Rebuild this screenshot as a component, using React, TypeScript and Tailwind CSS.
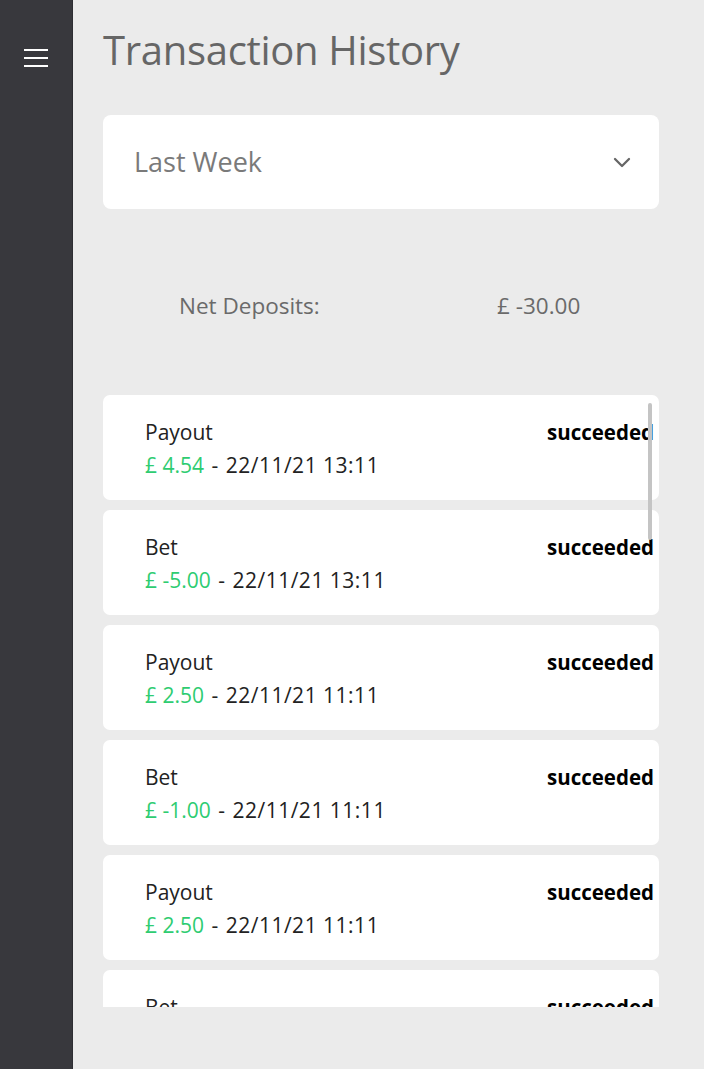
import React from "react";

const items = [
  { type: "Payout", amount: "£ 4.54", date: "22/11/21 13:11" },
  { type: "Bet", amount: "£ -5.00", date: "22/11/21 13:11" },
  { type: "Payout", amount: "£ 2.50", date: "22/11/21 11:11" },
  { type: "Bet", amount: "£ -1.00", date: "22/11/21 11:11" },
  { type: "Payout", amount: "£ 2.50", date: "22/11/21 11:11" },
  { type: "Bet", amount: "£ -1.00", date: "22/11/21 11:11" },
];

export default function App() {
  return (
    <div
      className="flex h-[1069px] w-[704px] overflow-hidden bg-[#ebebeb]"
      style={{ fontFamily: '"Open Sans", "Noto Sans", sans-serif' }}
    >
      <aside className="w-[73px] shrink-0 bg-[#38383d] border-r border-[#2e2e33] flex justify-center pt-[49px]">
        <div className="flex flex-col gap-[6px] w-[24px]">
          <div className="h-[2px] bg-white" />
          <div className="h-[2px] bg-white" />
          <div className="h-[2px] bg-white" />
        </div>
      </aside>
      <main className="flex-1 pl-[30px] pr-[45px]">
        <h1 className="mt-[24px] text-[40px] leading-[52px] text-[#666666] tracking-[-0.3px]">
          Transaction History
        </h1>
        <div className="mt-[39px] h-[94px] rounded-[8px] bg-white flex items-center justify-between pl-[31px] pr-[28px]">
          <span className="text-[27px] text-[#7a7a7a]">Last Week</span>
          <svg width="18" height="11" viewBox="0 0 18 11" fill="none">
            <path d="M2 2l7 7 7-7" stroke="#666" strokeWidth="2.3" strokeLinecap="round" strokeLinejoin="round" />
          </svg>
        </div>
        <div className="mt-[80px] flex text-[22.5px] text-[#6a6a6a]">
          <span className="ml-[76px] w-[318px]">Net Deposits:</span>
          <span>£ -30.00</span>
        </div>
        <div className="relative mt-[72px] h-[612px] overflow-hidden">
          <div className="flex flex-col gap-[10px]">
            {items.map((it, i) => (
              <div
                key={i}
                className="h-[105px] shrink-0 rounded-[7px] bg-white flex justify-between pl-[42px] pr-[5px] pt-[21px]"
              >
                <div className="text-[21px] leading-[33px] text-[#222]">
                  <div>{it.type}</div>
                  <div>
                    <span className="text-[#2ecc71]">{it.amount}</span>
                    <span className="[word-spacing:2px]"> - </span>
                    <span className="tracking-[0.5px]">{it.date}</span>
                  </div>
                </div>
                <div className="text-[20.5px] leading-[33px] font-bold text-black">succeeded</div>
              </div>
            ))}
          </div>
          <div className="absolute right-[7px] top-[8px] w-[4px] h-[137px] rounded-full bg-[#c4c4c4]" />
        </div>
      </main>
    </div>
  );
}
